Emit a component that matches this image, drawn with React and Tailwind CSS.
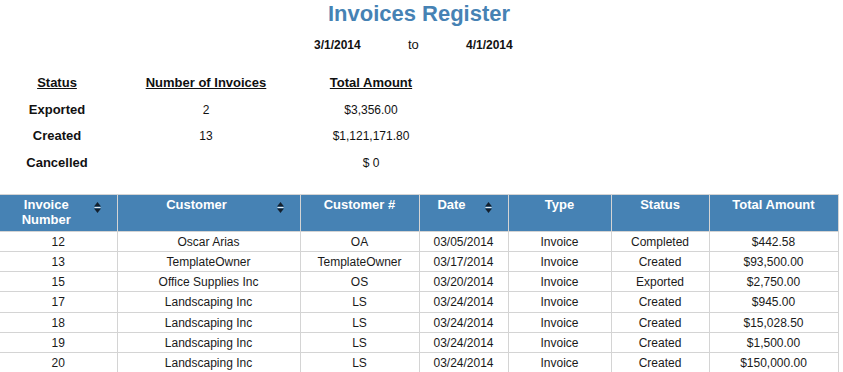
import React from "react";

const SortIcon = () => (
  <svg width="7" height="11" viewBox="0 0 7 11" className="block shrink-0">
    <path d="M3.5 0 L7 4.5 L0 4.5 Z" fill="#13202e" />
    <path d="M0 6.5 L7 6.5 L3.5 11 Z" fill="#13202e" />
    <path d="M0.5 5.5 L6.5 5.5" stroke="#dfe8f0" strokeWidth="1" />
  </svg>
);

const summary = [
  { s: "Exported", n: "2", t: "$3,356.00", h: "h-[27px]" },
  { s: "Created", n: "13", t: "$1,121,171.80", h: "h-[26px]" },
  { s: "Cancelled", n: "", t: "$ 0", h: "h-[27px]" },
];

const rows = [
  ["12", "Oscar Arias", "OA", "03/05/2014", "Invoice", "Completed", "$442.58"],
  ["13", "TemplateOwner", "TemplateOwner", "03/17/2014", "Invoice", "Created", "$93,500.00"],
  ["15", "Office Supplies Inc", "OS", "03/20/2014", "Invoice", "Exported", "$2,750.00"],
  ["17", "Landscaping Inc", "LS", "03/24/2014", "Invoice", "Created", "$945.00"],
  ["18", "Landscaping Inc", "LS", "03/24/2014", "Invoice", "Created", "$15,028.50"],
  ["19", "Landscaping Inc", "LS", "03/24/2014", "Invoice", "Created", "$1,500.00"],
  ["20", "Landscaping Inc", "LS", "03/24/2014", "Invoice", "Created", "$150,000.00"],
];

const headers = [
  { label: "Invoice\nNumber", sort: true },
  { label: "Customer", sort: true },
  { label: "Customer #", sort: false },
  { label: "Date", sort: true },
  { label: "Type", sort: false },
  { label: "Status", sort: false },
  { label: "Total Amount", sort: false },
];

export default function App() {
  return (
    <div className="w-[843px] h-[372px] overflow-hidden bg-white text-[#111] font-['Liberation_Sans',Arial,sans-serif]">
      <div className="w-[838px] pt-[1px] h-[28px] text-center text-[22px] leading-[26px] font-bold text-[#4682b4]">
        Invoices Register
      </div>
      <div className="flex pl-[314px] pt-[10px] h-[20px] items-baseline leading-[14px]">
        <span className="w-[94px] text-[12px] font-bold">3/1/2014</span>
        <span className="w-[58px] text-[13px]">to</span>
        <span className="text-[12px] font-bold">4/1/2014</span>
      </div>
      <div className="mt-[21px] w-[444px] grid grid-cols-[114px_184px_146px]">
        <div className="h-[27px] leading-[27px] text-center text-[13px] font-bold underline">Status</div>
        <div className="h-[27px] leading-[27px] text-center text-[13px] font-bold underline">Number of Invoices</div>
        <div className="h-[27px] leading-[27px] text-center text-[13px] font-bold underline">Total Amount</div>
        {summary.map((r) => (
          <React.Fragment key={r.s}>
            <div className={`${r.h} flex items-center justify-center text-[13px] font-bold`}>{r.s}</div>
            <div className={`${r.h} flex items-center justify-center text-[12px]`}>{r.n}</div>
            <div className={`${r.h} flex items-center justify-center text-[12px]`}>{r.t}</div>
          </React.Fragment>
        ))}
      </div>
      <table className="mt-[18px] w-[838px] table-fixed border-collapse text-[12px]">
        <colgroup>
          <col className="w-[117px]" />
          <col className="w-[183px]" />
          <col className="w-[119px]" />
          <col className="w-[89px]" />
          <col className="w-[103px]" />
          <col className="w-[98px]" />
          <col className="w-[129px]" />
        </colgroup>
        <thead>
          <tr className="h-[37px]">
            {headers.map((h, i) => (
              <th
                key={i}
                className={`bg-[#4682b4] p-0 align-top border border-[#d4d4d4] ${i === 0 ? "border-l-0" : ""} text-white text-[13px] font-bold leading-[15px]`}
              >
                <div className="flex items-start h-[36px] pt-[2px]">
                  <div className="flex-1 text-center whitespace-pre-line">{h.label}</div>
                  {h.sort && (
                    <div className="mt-[5px] mr-[16px] ml-[1px]">
                      <SortIcon />
                    </div>
                  )}
                </div>
              </th>
            ))}
          </tr>
        </thead>
        <tbody>
          {rows.map((r, ri) => (
            <tr key={ri} className={ri === 3 ? "h-[21px]" : "h-[20px]"}>
              {r.map((c, ci) => (
                <td
                  key={ci}
                  className={`p-0 text-center align-middle border border-[#d4d4d4] ${ci === 0 ? "border-l-0" : ""} ${ri === 0 ? "border-t-0" : ""} text-[#1a1a1a] leading-[14px] whitespace-nowrap`}
                >
                  {c}
                </td>
              ))}
            </tr>
          ))}
        </tbody>
      </table>
    </div>
  );
}
